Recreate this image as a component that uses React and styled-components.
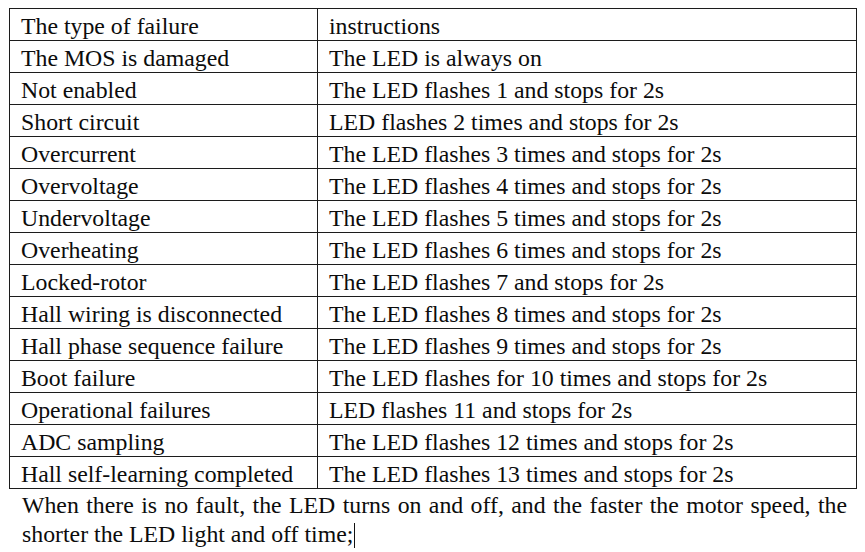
import styled, { createGlobalStyle } from "styled-components";

const rows = [
  { failure: "The type of failure", note: "instructions" },
  { failure: "The MOS is damaged", note: "The LED is always on" },
  { failure: "Not enabled", note: "The LED flashes 1 and stops for 2s" },
  { failure: "Short circuit", note: "LED flashes 2 times and stops for 2s" },
  { failure: "Overcurrent", note: "The LED flashes 3 times and stops for 2s" },
  { failure: "Overvoltage", note: "The LED flashes 4 times and stops for 2s" },
  { failure: "Undervoltage", note: "The LED flashes 5 times and stops for 2s" },
  { failure: "Overheating", note: "The LED flashes 6 times and stops for 2s" },
  { failure: "Locked-rotor", note: "The LED flashes 7 and stops for 2s" },
  { failure: "Hall wiring is disconnected", note: "The LED flashes 8 times and stops for 2s" },
  { failure: "Hall phase sequence failure", note: "The LED flashes 9 times and stops for 2s" },
  { failure: "Boot failure", note: "The LED flashes for 10 times and stops for 2s" },
  { failure: "Operational failures", note: "LED flashes 11 and stops for 2s" },
  { failure: "ADC sampling", note: "The LED flashes 12 times and stops for 2s" },
  { failure: "Hall self-learning completed", note: "The LED flashes 13 times and stops for 2s" },
];

const GlobalStyle = createGlobalStyle`
  body {
    margin: 0;
    background: #fff;
    color: #0c0c0c;
    font-family: "Liberation Serif", "Times New Roman", serif;
  }
`;

const Page = styled.div`
  width: 865px;
  height: 552px;
  padding: 8px 8px 0 9px;
  box-sizing: border-box;
  overflow: hidden;
`;

const Table = styled.table`
  width: 848px;
  border-collapse: collapse;
  table-layout: fixed;
`;

const Cell = styled.td`
  width: ${({ $wide }) => ($wide ? "auto" : "308px")};
  height: 32px;
  padding: 2px 0 0 11px;
  box-sizing: border-box;
  border: 1.5px solid #1c1c1c;
  font-size: 23.8px;
  line-height: 28px;
  white-space: nowrap;
  vertical-align: middle;
`;

const Note = styled.p`
  margin: 0;
  padding: 2px 10px 0 13px;
  font-size: 23.8px;
  line-height: 29px;
  text-align: justify;
`;

const Caret = styled.span`
  display: inline-block;
  width: 1px;
  height: 25px;
  margin-left: 1px;
  background: #111;
  vertical-align: -6px;
`;

export default function App() {
  return (
    <Page>
      <GlobalStyle />
      <Table>
        <tbody>
          {rows.map((row) => (
            <tr key={row.failure}>
              <Cell>{row.failure}</Cell>
              <Cell $wide>{row.note}</Cell>
            </tr>
          ))}
        </tbody>
      </Table>
      <Note>
        When there is no fault, the LED turns on and off, and the faster the
        motor speed, the shorter the LED light and off time;
        <Caret />
      </Note>
    </Page>
  );
}
